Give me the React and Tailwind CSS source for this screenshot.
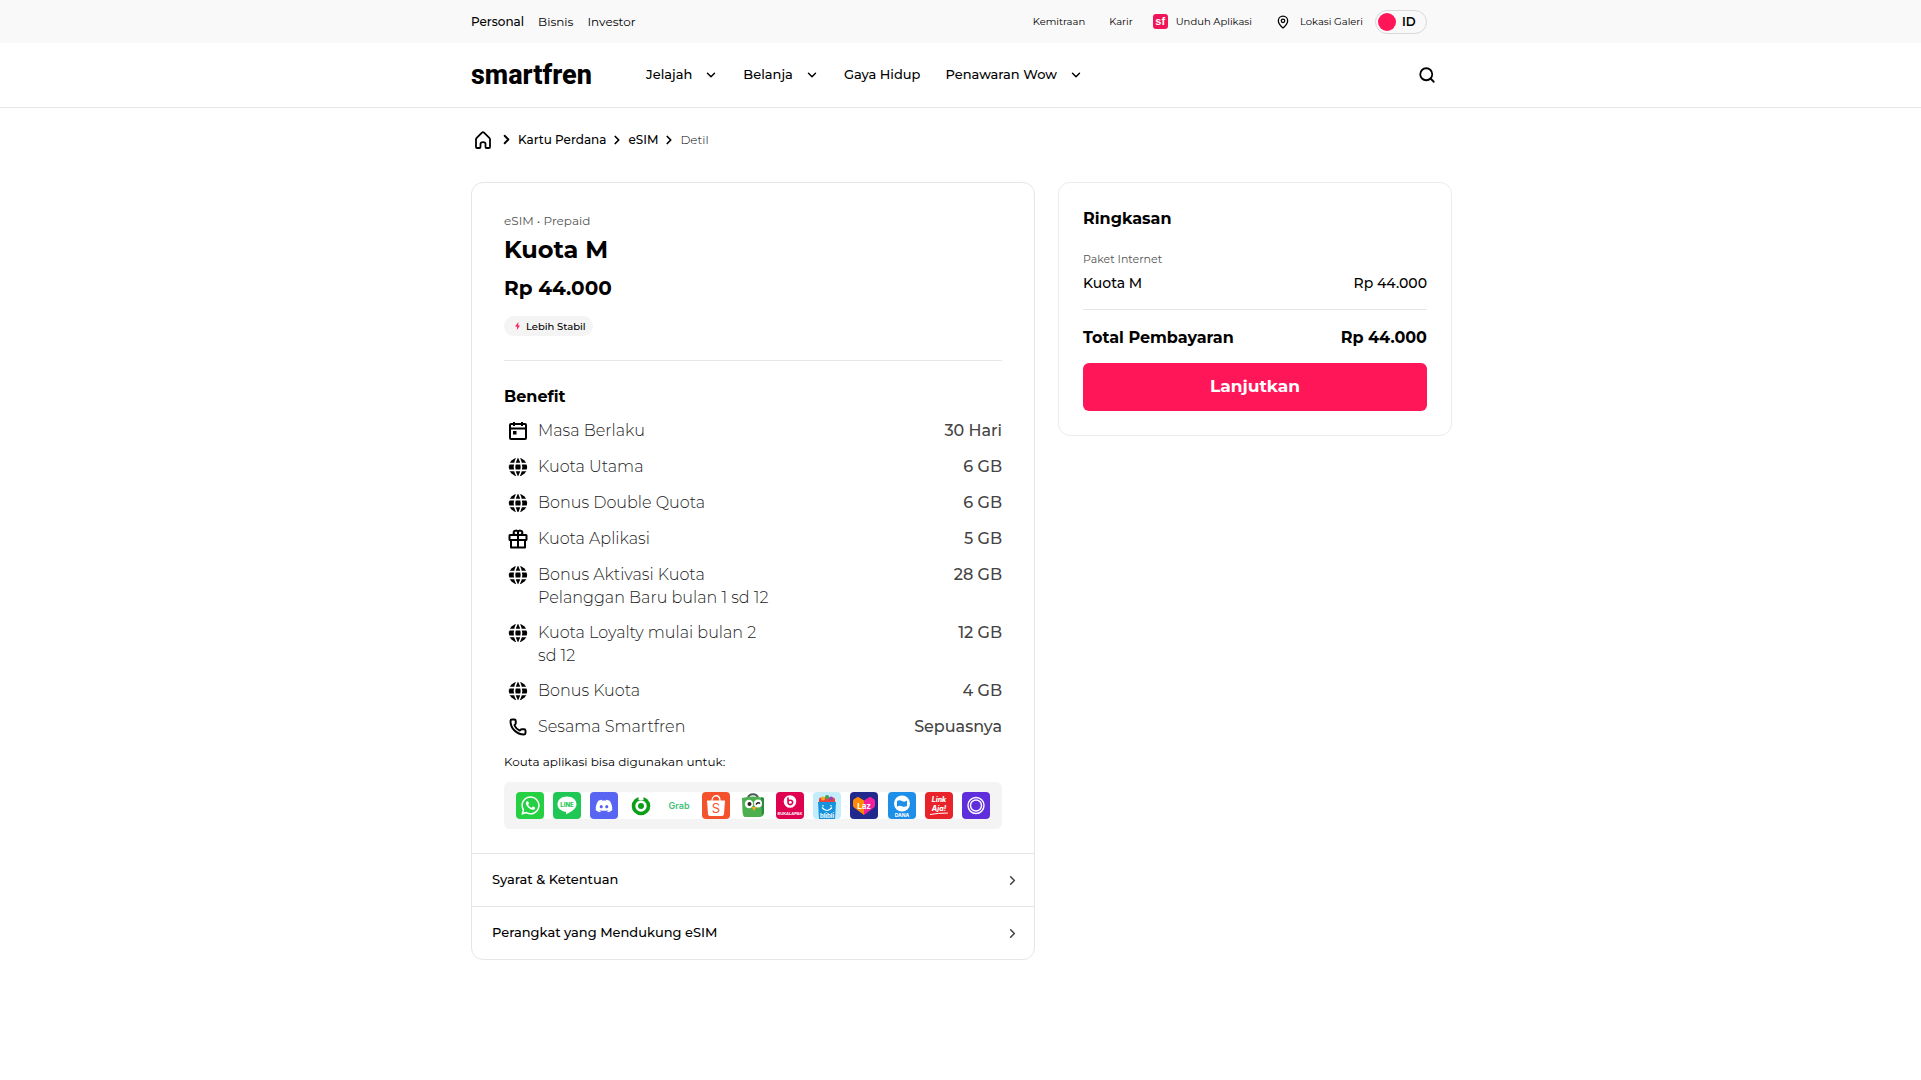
import { ChevronDown, ChevronRight, Search, MapPin, Phone } from 'lucide-react'
import { FaWhatsapp, FaDiscord } from 'react-icons/fa'

const menu = [
  { label: 'Jelajah', dropdown: true },
  { label: 'Belanja', dropdown: true },
  { label: 'Gaya Hidup', dropdown: false },
  { label: 'Penawaran Wow', dropdown: true },
]

const benefits = [
  { icon: 'calendar', label: 'Masa Berlaku', value: '30 Hari' },
  { icon: 'globe', label: 'Kuota Utama', value: '6 GB' },
  { icon: 'globe', label: 'Bonus Double Quota', value: '6 GB' },
  { icon: 'gift', label: 'Kuota Aplikasi', value: '5 GB' },
  { icon: 'globe', label: 'Bonus Aktivasi Kuota Pelanggan Baru bulan 1 sd 12', value: '28 GB' },
  { icon: 'globe', label: 'Kuota Loyalty mulai bulan 2 sd 12', value: '12 GB' },
  { icon: 'globe', label: 'Bonus Kuota', value: '4 GB' },
  { icon: 'phone', label: 'Sesama Smartfren', value: 'Sepuasnya' },
]

function BenefitIcon({ name }) {
  if (name === 'phone') return <Phone size={18} strokeWidth={2.6} />
  if (name === 'gift') {
    return (
      <svg width="24" height="24" viewBox="0 0 24 24" fill="none" stroke="black" strokeWidth="2" strokeLinejoin="round">
        <rect x="3.500" y="8" width="17" height="5" rx="0.500" />
        <path d="M5 13v7.500h14V13M12 8v12.500" />
        <path d="M12 8H9.500a2.200 2.200 0 1 1 2.500-2.500V8zM12 8h2.500A2.200 2.200 0 1 0 12 5.500" />
      </svg>
    )
  }
  if (name === 'calendar') {
    return (
      <svg width="24" height="24" viewBox="0 0 24 24" fill="none" stroke="black" strokeWidth="2">
        <rect x="4" y="5" width="16" height="15" rx="1" />
        <path d="M4 9.500h16M8 3v4M16 3v4" />
        <rect x="7" y="12" width="3.500" height="3.500" fill="black" stroke="none" />
      </svg>
    )
  }
  return (
    <svg width="24" height="24" viewBox="0 0 24 24" fill="none">
      <circle cx="12" cy="12" r="9.200" fill="black" />
      <g stroke="white" strokeWidth="1.600">
        <path d="M2 8.600h20M2 15.400h20" />
        <path d="M11.500 1.500Q5.500 12 11.500 22.500M12.500 1.500Q18.500 12 12.500 22.500" />
      </g>
    </svg>
  )
}

function Tile({ bg, children }) {
  return (
    <svg width="28" height="27" viewBox="0 0 28 27" fontFamily="Inter, sans-serif">
      <rect width="28" height="27" rx="4" fill={bg} />
      {children}
    </svg>
  )
}

function AppIcons() {
  return (
    <div className="flex flex-1 items-center justify-between bg-white">
      <Tile bg="#25d042">
        <FaWhatsapp x="4" y="3" size={21} color="white" />
      </Tile>
      <Tile bg="#1fc755">
        <path d="M14 4.500c-5.500 0-9.500 3.400-9.500 7.700 0 4 3.300 6.800 8 7.500.8.200.7.900.5 2.600 4.500-2 10.500-5.600 10.500-10.100 0-4.300-4-7.700-9.500-7.700z" fill="white" />
        <text x="14" y="14.500" fontSize="6" fontWeight="800" textAnchor="middle" fill="#1fc755">LINE</text>
      </Tile>
      <Tile bg="#5865f2">
        <FaDiscord x="5" y="5" size={18} color="white" />
      </Tile>
      <Tile bg="white">
        <circle cx="14" cy="14" r="7.500" fill="none" stroke="#0b9f17" strokeWidth="3.600" />
        <path d="M14 8V3" stroke="white" strokeWidth="5" />
        <circle cx="14" cy="14" r="3" fill="#0b9f17" />
      </Tile>
      <Tile bg="white">
        <text x="14" y="17" fontSize="9" fontWeight="600" textAnchor="middle" fill="#3fbf78">Grab</text>
      </Tile>
      <Tile bg="#f4522c">
        <path d="M10 9c0-7 8-7 8 0" fill="none" stroke="white" strokeWidth="1.300" />
        <path d="M5 8.500h18l-1 13.500q-.2 2-2 2H8q-1.800 0-2-2z" fill="white" />
        <text x="14" y="21" fontSize="13" textAnchor="middle" fill="#f4522c">S</text>
      </Tile>
      <Tile bg="white">
        <path d="M9 6c1-5 9-5 10 0" fill="none" stroke="#4b5a54" strokeWidth="2" />
        <path d="M3 6q11-3 22 0v14q0 5-5 5H6q-2 0-2.500-5z" fill="#4caf50" />
        <path d="M22 5l3 1v15l-2 3z" fill="#2e8b3d" />
        <circle cx="10" cy="12" r="4.200" fill="white" />
        <circle cx="19" cy="11.500" r="4" fill="white" />
        <circle cx="10.500" cy="12" r="2" fill="#222" />
        <path d="M17 12.500q2-3 4-1" stroke="#222" strokeWidth="1.500" fill="none" />
        <path d="M12.500 15h5l-2.500 4z" fill="#f5a623" />
      </Tile>
      <Tile bg="#df0050">
        <circle cx="14" cy="9.500" r="6.300" fill="white" />
        <path d="M12 5.500v4.500a2.300 2.300 0 1 0 4-1.200c-1-1-2.500-.6-4 0" fill="none" stroke="#df0050" strokeWidth="1.600" />
        <text x="14" y="22.500" fontSize="4" fontWeight="700" textAnchor="middle" fill="white">BUKALAPAK</text>
      </Tile>
      <Tile bg="#c5ecfa">
        <rect x="6" y="5.500" width="16" height="6" rx="2" fill="#e8443c" />
        <circle cx="10" cy="6.500" r="2" fill="#f7a928" />
        <circle cx="14" cy="5" r="2" fill="#36a852" />
        <circle cx="18" cy="6.500" r="2" fill="#9b3fb5" />
        <path d="M5 10h18l-1 17H6z" fill="#1593dc" />
        <path d="M10 13v1.500M18 13v1.500M9 15.500q5 6 10 0" stroke="white" strokeWidth="1.200" fill="none" />
        <text x="14" y="26" fontSize="6" fontWeight="700" textAnchor="middle" fill="white">blibli</text>
      </Tile>
      <Tile bg="#21298c">
        <path d="M14 23L4 15.500q-1.500-1-1-3V9q0-1.500 1.500-2.200L8 4.800 14 8.500z" fill="#ff8a00" />
        <path d="M14 23l10-7.500q1.500-1 1-3V9q0-1.500-1.500-2.200L20 4.800 14 8.500z" fill="#f5219b" />
        <text x="14" y="16.500" fontSize="8" fontWeight="700" textAnchor="middle" fill="white">Laz</text>
      </Tile>
      <Tile bg="#1e8fe8">
        <circle cx="14" cy="11.500" r="8" fill="white" />
        <path d="M9 9q2.500-1.500 5 0t5-.5v5.500q-2.500 1.500-5 .3t-5 .4z" fill="#1e8fe8" />
        <text x="14" y="24.500" fontSize="5" fontWeight="700" textAnchor="middle" fill="white">DANA</text>
      </Tile>
      <Tile bg="#e8232a">
        <text x="14" y="10" fontSize="7" fontWeight="800" fontStyle="italic" textAnchor="middle" fill="white">Link</text>
        <text x="14" y="19" fontSize="7" fontWeight="800" fontStyle="italic" textAnchor="middle" fill="white">Aja!</text>
        <path d="M5 22.500q8-1.500 18-1.500" stroke="white" strokeWidth="1" fill="none" />
      </Tile>
      <Tile bg="#5f2fdc">
        <circle cx="14" cy="13.500" r="8" fill="none" stroke="white" strokeWidth="1.400" />
        <circle cx="14" cy="13.500" r="5.500" fill="none" stroke="white" strokeWidth="1.400" />
      </Tile>
    </div>
  )
}

function TopBar() {
  return (
    <div className="bg-[#f9f9f9]">
      <div className="mx-auto flex h-[43px] max-w-[983px] items-center justify-between pr-[25px] pl-0.5">
        <nav className="flex gap-3.5 text-[12px]">
          <a href="#" className="font-medium">Personal</a>
          <a href="#">Bisnis</a>
          <a href="#">Investor</a>
        </nav>
        <div className="flex items-center text-[10px]">
          <a href="#" className="mr-6">Kemitraan</a>
          <a href="#" className="mr-5">Karir</a>
          <a href="#" className="mr-6 flex items-center gap-2">
            <span className="flex size-[15px] items-center justify-center rounded-[3px] bg-[#f0145a] font-['Liberation_Sans'] text-[11px] leading-none font-bold text-white">sf</span>
            Unduh Aplikasi
          </a>
          <a href="#" className="mr-3 flex items-center gap-2.5">
            <MapPin size={14} strokeWidth={2.2} />
            Lokasi Galeri
          </a>
          <button className="flex h-6 w-[52px] items-center gap-1.5 rounded-full border border-[#d9d9d9] px-0.5 text-[12px] font-semibold">
            <span className="size-[18px] rounded-full bg-[#ff1659]"></span>
            ID
          </button>
        </div>
      </div>
    </div>
  )
}

function Header() {
  return (
    <header className="border-b border-[#e6e6e6]">
      <div className="mx-auto flex h-16 max-w-[983px] items-center pr-4 pl-0.5">
        <a href="#" className="w-[175px] font-['Roboto'] text-[27px] leading-8 font-extrabold">smartfren</a>
        <nav className="flex flex-1 gap-[25px] text-[13px] font-medium">
          {menu.map((item) => (
            <a key={item.label} href="#" className="flex items-center gap-3">
              {item.label}
              {item.dropdown && <ChevronDown size={14} strokeWidth={2.5} />}
            </a>
          ))}
        </nav>
        <button aria-label="Cari">
          <Search size={18} strokeWidth={2.4} />
        </button>
      </div>
    </header>
  )
}

function Breadcrumb() {
  return (
    <nav className="flex h-[63px] items-center gap-1 pl-1 text-[12px] font-medium">
      <a href="#" aria-label="Beranda" className="mr-1">
        <svg width="16" height="18" viewBox="0 0 16 18" fill="none" stroke="black" strokeWidth="1.800" strokeLinejoin="round">
          <path d="M1 8.500Q1 7.500 1.700 6.800L7 1.600q1-1 2 0l5.300 5.200q.7.700.7 1.700V16q0 1-1 1h-2.500q-1 0-1-1v-3q0-1.800-2.500-1.800T5.500 13v3q0 1-1 1H2q-1 0-1-1z" />
        </svg>
      </a>
      <ChevronRight size={15} strokeWidth={3} />
      <a href="#">Kartu Perdana</a>
      <ChevronRight size={14} strokeWidth={3} />
      <a href="#">eSIM</a>
      <ChevronRight size={14} strokeWidth={3} />
      <span className="font-light">Detil</span>
    </nav>
  )
}

function Detail() {
  return (
    <section className="w-full max-w-[564px] rounded-xl border border-[#e6e6e6]">
      <div className="px-8 pt-[29px] pb-6">
        <p className="text-[12px] leading-[18px] text-[#555]">eSIM • Prepaid</p>
        <h1 className="mt-1 text-[24px] leading-8 font-bold">Kuota M</h1>
        <p className="mt-2 text-[20px] leading-7 font-bold">Rp 44.000</p>
        <span className="mt-3.5 flex h-5 w-[89px] items-center gap-1 rounded-full bg-[#f4f4f4] pl-2.5 text-[10px] font-medium">
          <svg width="8" height="10" viewBox="0 0 8 10" fill="#ff1659">
            <path d="M4.500 1L1 5.500h2.200L2.800 9 6 4.500H4z" />
          </svg>
          Lebih Stabil
        </span>
        <hr className="mt-6 border-[#e6e6e6]" />
        <h2 className="mt-6 text-[16px] leading-6 font-bold">Benefit</h2>
        <ul className="mt-2.5 flex flex-col gap-3 text-[16px] leading-[23px]">
          {benefits.map((b) => (
            <li key={b.label} className="flex items-start">
              <span className="ml-0.5 flex size-6 items-center justify-center">
                <BenefitIcon name={b.icon} />
              </span>
              <span className="ml-2 w-[232px] font-light text-[#222]">{b.label}</span>
              <span className="ml-auto font-medium text-[#444]">{b.value}</span>
            </li>
          ))}
        </ul>
        <p className="mt-3.5 text-[12px] leading-[18px]">Kouta aplikasi bisa digunakan untuk:</p>
        <div className="mt-[11px] flex h-[47px] items-center rounded-md bg-[#f4f4f4] px-3">
          <AppIcons />
        </div>
      </div>
      {['Syarat & Ketentuan', 'Perangkat yang Mendukung eSIM'].map((title) => (
        <button key={title} className="flex h-[53px] w-full items-center justify-between border-t border-[#e6e6e6] pr-3.5 pl-5 text-[13px] font-medium">
          {title}
          <ChevronRight size={15} strokeWidth={2.5} color="#444" />
        </button>
      ))}
    </section>
  )
}

function Summary() {
  return (
    <aside className="flex-1 rounded-xl border border-[#ececec] p-6">
      <h2 className="text-[16px] leading-6 font-bold">Ringkasan</h2>
      <p className="mt-5 text-[11px] leading-4 text-[#555]">Paket Internet</p>
      <div className="mt-1 flex justify-between text-[14px] leading-6 font-medium">
        <span>Kuota M</span>
        <span>Rp 44.000</span>
      </div>
      <hr className="mt-3.5 border-[#e6e6e6]" />
      <div className="mt-4 flex justify-between text-[16px] leading-6 font-bold">
        <span>Total Pembayaran</span>
        <span>Rp 44.000</span>
      </div>
      <button className="mt-[13px] h-12 w-full rounded-md bg-[#ff1659] text-[17px] font-bold text-white">Lanjutkan</button>
    </aside>
  )
}

export default function App() {
  return (
    <div className="min-h-screen bg-white font-['Montserrat','Inter',sans-serif] text-black">
      <TopBar />
      <Header />
      <main className="mx-auto max-w-[983px] pb-10 pl-0.5">
        <Breadcrumb />
        <div className="mt-[11px] flex items-start gap-[23px]">
          <Detail />
          <Summary />
        </div>
      </main>
    </div>
  )
}
